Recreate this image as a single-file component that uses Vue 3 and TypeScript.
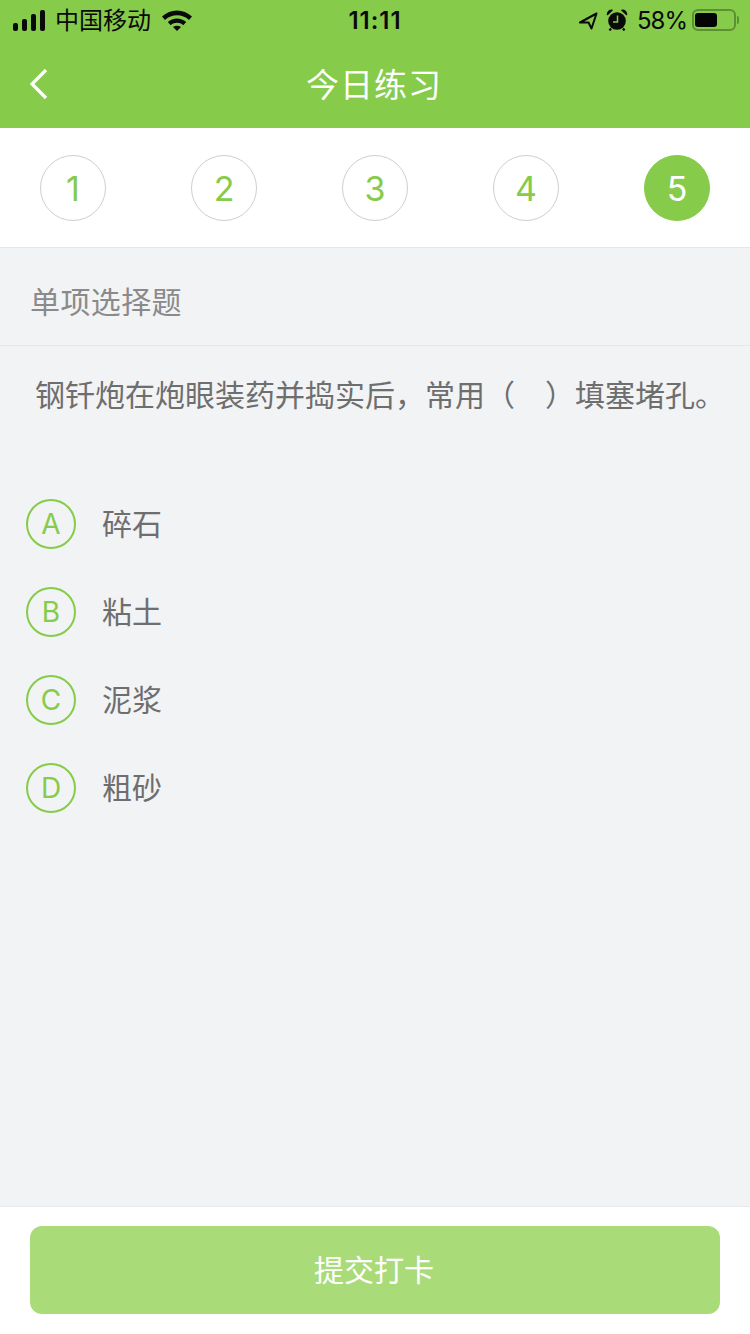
<template>
  <div class="page">
    <header class="header">
      <div class="status-bar">
        <div class="status-left">
          <span class="signal">
            <i v-for="h in signalBars" :key="h" :style="{ height: h + 'px' }"></i>
          </span>
          <span class="carrier">中国移动</span>
          <svg class="wifi" width="30" height="22" viewBox="0 0 30 22">
            <path d="M0 7.6C8.4 -.4 21.6 -.4 30 7.6L27 11C20.400 4.800 9.600 4.800 3 11Z" fill="#0a0a0a" />
            <path d="M5.800 13C11 8.200 19 8.200 24.200 13L21.300 16.200C17.500 13 12.500 13 8.700 16.200Z" fill="#0a0a0a" />
            <path d="M11 18C13.400 16.400 16.600 16.400 19 18L15 22Z" fill="#0a0a0a" />
          </svg>
        </div>
        <span class="time">11:11</span>
        <div class="status-right">
          <svg class="loc" width="20" height="20" viewBox="0 0 20 20">
            <path d="M18.500 3.500 2 12.500H10.500L13.500 18.500Z" fill="none" stroke="#0a0a0a" stroke-width="2" stroke-linejoin="round" />
          </svg>
          <svg class="alarm" width="22" height="22" viewBox="0 0 22 22">
            <circle cx="11" cy="12" r="8.800" fill="#0a0a0a" />
            <path d="M1.500 5.500C1.500 3 3.500 1 6 1.200ZM20.500 5.500C20.500 3 18.500 1 16 1.200Z" fill="#0a0a0a" stroke="#0a0a0a" stroke-width="1.500" stroke-linejoin="round" />
            <path d="M5 19.500 3.500 21.500M17 19.500 18.500 21.500" stroke="#0a0a0a" stroke-width="2.200" />
            <path d="M11.500 6.500v6.500H7" fill="none" stroke="#86cb4a" stroke-width="1.500" />
          </svg>
          <span class="percent">58%</span>
          <span class="battery"><i></i></span>
          <span class="battery-cap"></span>
        </div>
      </div>
      <div class="nav-bar">
        <svg class="back" width="22" height="32" viewBox="0 0 22 32">
          <path d="M18 2 4 16l14 14" fill="none" stroke="#fff" stroke-width="3.200" />
        </svg>
        <span class="title">今日练习</span>
      </div>
    </header>

    <div class="steps">
      <span
        v-for="n in steps"
        :key="n"
        class="step"
        :class="{ active: n === current }"
      >{{ n }}</span>
    </div>

    <div class="type">单项选择题</div>
    <p class="question">钢钎炮在炮眼装药并捣实后，常用（　）填塞堵孔。</p>

    <ul class="options">
      <li v-for="opt in options" :key="opt.key" class="option">
        <span class="letter">{{ opt.key }}</span>
        <span class="label">{{ opt.label }}</span>
      </li>
    </ul>

    <footer class="footer">
      <button class="submit">提交打卡</button>
    </footer>
  </div>
</template>
<script setup lang="ts">
const signalBars = [8, 12, 17, 21];
const steps = [1, 2, 3, 4, 5];
const current = 5;
const options = [
  { key: "A", label: "碎石" },
  { key: "B", label: "粘土" },
  { key: "C", label: "泥浆" },
  { key: "D", label: "粗砂" },
];
</script>
<style>
html,
body {
  margin: 0;
  background: #f2f3f5;
}
</style>
<style scoped>
.page {
  width: 750px;
  height: 1334px;
  display: flex;
  flex-direction: column;
  background: #f2f3f5;
  font-family: "Liberation Sans", "Noto Sans CJK SC", sans-serif;
  overflow: hidden;
}

.header {
  height: 128px;
  background: #86cb4a;
  flex-shrink: 0;
}

.status-bar {
  height: 40px;
  display: flex;
  align-items: center;
  justify-content: space-between;
  position: relative;
  color: #0a0a0a;
}

.status-left {
  display: flex;
  align-items: center;
  padding-left: 13px;
}

.signal {
  display: flex;
  align-items: flex-end;
  gap: 4px;
  height: 21px;
}

.signal i {
  width: 5px;
  background: #0a0a0a;
  border-radius: 2px;
}

.carrier {
  font-size: 24px;
  margin-left: 10px;
  line-height: 40px;
  margin-top: 1px;
}

.wifi {
  margin-left: 11px;
}

.time {
  position: absolute;
  left: 0;
  right: 0;
  text-align: center;
  font-size: 24px;
  font-weight: 600;
  letter-spacing: 1px;
  font-family: Inter, "Liberation Sans", sans-serif;
  line-height: 40px;
  margin-top: 1px;
}

.status-right {
  display: flex;
  align-items: center;
  padding-right: 11px;
}

.loc {
  margin-right: 8px;
}

.alarm {
  margin-right: 9px;
  margin-top: -1px;
}

.percent {
  font-size: 24px;
  margin-right: 5px;
  letter-spacing: -1px;
  font-family: Inter, "Liberation Sans", sans-serif;
  font-weight: 400;
}

.battery {
  width: 44px;
  height: 22px;
  box-sizing: border-box;
  border: 2px solid #5d8f35;
  border-radius: 6px;
  padding: 2px 2px 2px 1px;
  display: flex;
}

.battery i {
  width: 22px;
  background: #050505;
  border-radius: 3px;
}

.battery-cap {
  width: 2px;
  height: 8px;
  margin-left: 1px;
  background: #5d8f35;
  border-radius: 0 2px 2px 0;
}

.nav-bar {
  height: 88px;
  display: flex;
  align-items: center;
  justify-content: center;
  position: relative;
}

.back {
  position: absolute;
  left: 28px;
  top: 28px;
}

.title {
  color: #fff;
  font-size: 33px;
  letter-spacing: 1px;
  margin: -2px 2px 0 0;
}

.steps {
  height: 120px;
  flex-shrink: 0;
  box-sizing: border-box;
  background: #fff;
  border-bottom: 1px solid #e6e6e6;
  display: flex;
  align-items: center;
  justify-content: space-between;
  padding: 1px 40px 0;
}

.step {
  width: 66px;
  height: 66px;
  box-sizing: border-box;
  border: 1px solid #cfcfcf;
  border-radius: 50%;
  display: flex;
  align-items: center;
  justify-content: center;
  color: #86cb4a;
  font-size: 34px;
  font-family: Inter, "Liberation Sans", sans-serif;
  font-weight: 400;
}

.step.active {
  background: #86cb4a;
  border-color: #86cb4a;
  color: #fff;
}

.type {
  height: 98px;
  flex-shrink: 0;
  box-sizing: border-box;
  border-bottom: 1px solid #e6e7e9;
  padding: 14px 0 0 30px;
  line-height: 82px;
  font-size: 30px;
  letter-spacing: 0.4px;
  color: #8a8a8a;
}

.question {
  margin: 0;
  height: 120px;
  flex-shrink: 0;
  padding: 30px 0 0 35px;
  box-sizing: border-box;
  font-size: 30px;
  line-height: 40px;
  color: #6e6e6e;
  white-space: nowrap;
}

.options {
  list-style: none;
  margin: 0;
  padding: 33px 0 0 26px;
  flex: 1;
  display: flex;
  flex-direction: column;
  gap: 38px;
}

.option {
  display: flex;
  align-items: center;
  height: 50px;
}

.letter {
  width: 50px;
  height: 50px;
  box-sizing: border-box;
  border: 2px solid #86cb4a;
  border-radius: 50%;
  display: flex;
  align-items: center;
  justify-content: center;
  color: #86cb4a;
  font-size: 28px;
  font-family: Inter, "Liberation Sans", sans-serif;
  font-weight: 400;
}

.label {
  margin: 0 0 4px 26px;
  font-size: 30px;
  color: #6e6e6e;
}

.footer {
  height: 128px;
  flex-shrink: 0;
  box-sizing: border-box;
  background: #fff;
  border-top: 1px solid #e8e9ec;
  padding: 19px 30px 0;
}

.submit {
  display: block;
  width: 690px;
  height: 88px;
  border: none;
  border-radius: 12px;
  padding: 0 2px 4px 0;
  background: #a9dc79;
  color: #fff;
  font-family: inherit;
  font-size: 30px;
}
</style>
